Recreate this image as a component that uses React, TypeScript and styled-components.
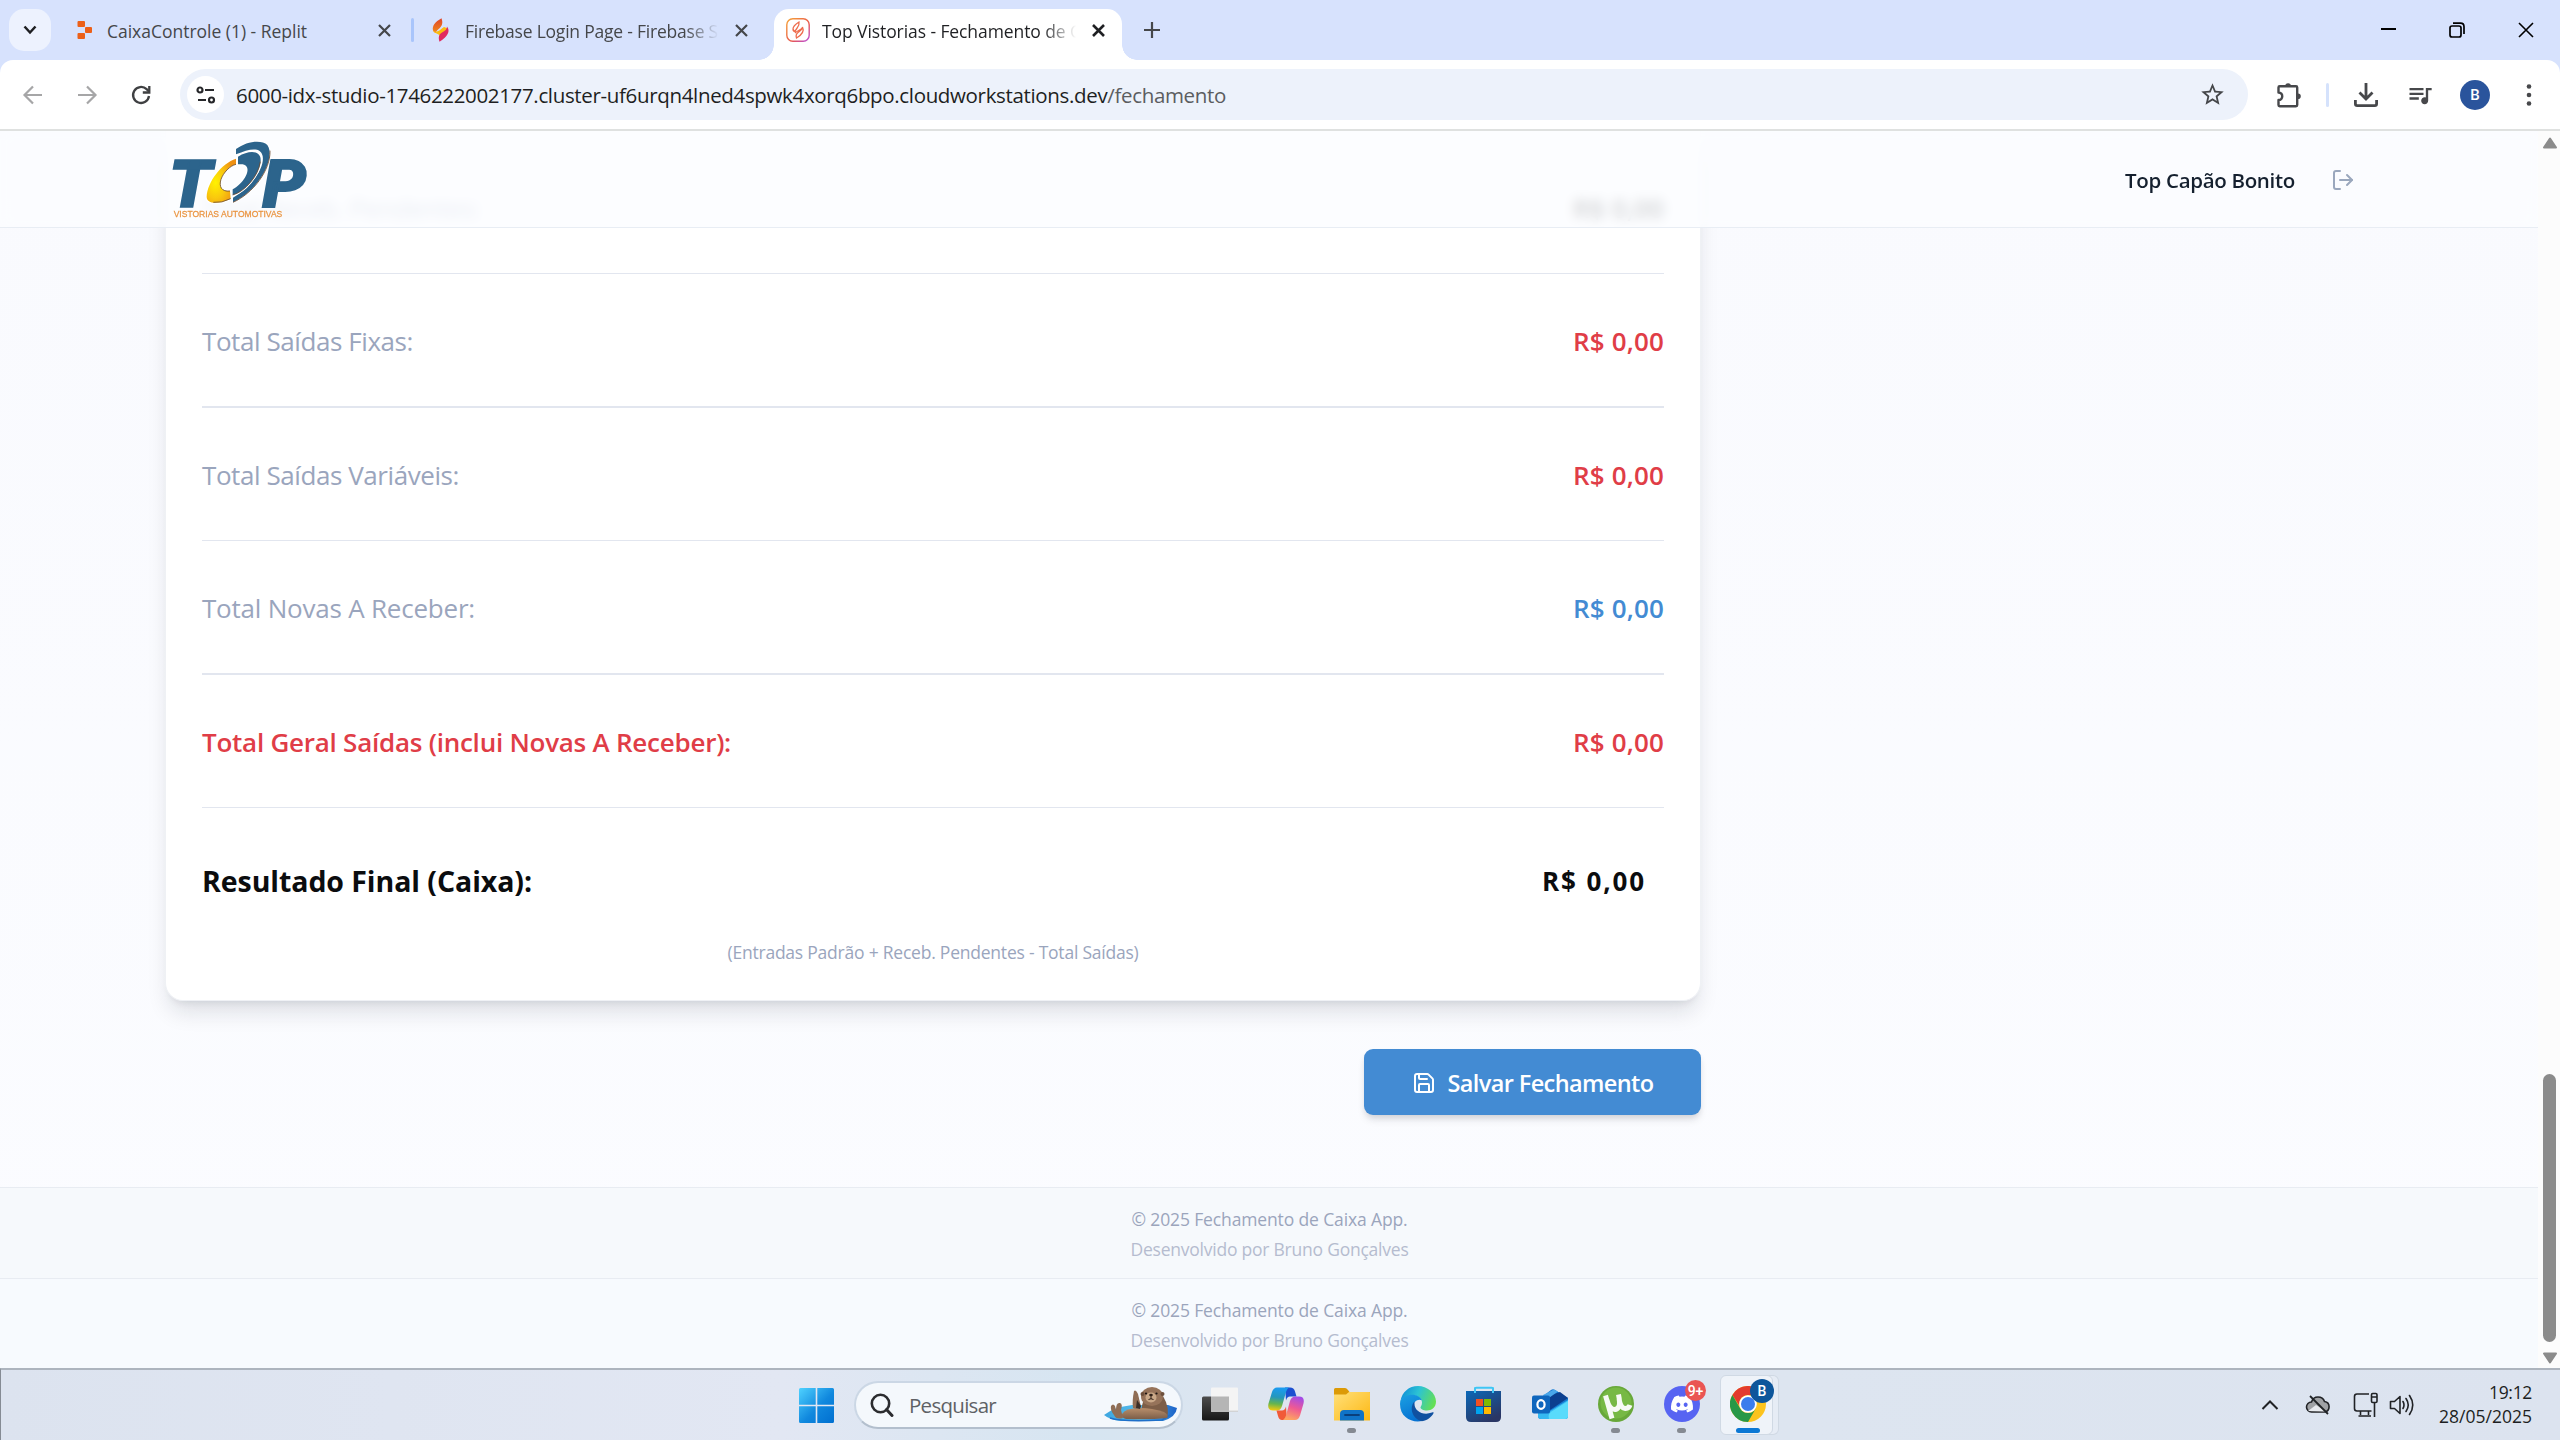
import React, { useLayoutEffect, useRef, useState } from "react";
import styled, { createGlobalStyle } from "styled-components";
import { LogOut, Save } from "lucide-react";
import { MdStarBorder, MdQueueMusic } from "react-icons/md";
import { FaDiscord } from "react-icons/fa";

const GlobalStyle = createGlobalStyle`
  * { box-sizing: border-box; }
  html, body { margin: 0; padding: 0; overflow: hidden; }
  body { font-family: "Open Sans", "Noto Sans", sans-serif; }
  svg { display: block; flex: none; }
`;

/* ---------- text fitted to a measure ---------- */

const Fitted = styled.span<{ $size: number; $weight?: number; $color?: string }>`
  display: inline-block;
  flex: none;
  white-space: pre;
  font-size: ${(p) => p.$size}px;
  font-weight: ${(p) => p.$weight ?? 400};
  color: ${(p) => p.$color ?? "inherit"};
`;

type TextProps = {
  width: number;
  size: number;
  weight?: number;
  color?: string;
  children: React.ReactNode;
};

function Text({ width, size, weight, color, children }: TextProps) {
  const ref = useRef<HTMLSpanElement>(null);
  const [spacing, setSpacing] = useState(0);
  useLayoutEffect(() => {
    const el = ref.current;
    if (!el) return;
    const count = (el.textContent ?? "").length;
    setSpacing((width - el.getBoundingClientRect().width) / count);
  }, [width]);
  return (
    <Fitted ref={ref} $size={size} $weight={weight} $color={color} style={{ letterSpacing: spacing }}>
      {children}
    </Fitted>
  );
}

/* ---------- browser frame ---------- */

const Screen = styled.div`
  width: 2560px;
  height: 1440px;
  display: flex;
  flex-direction: column;
  overflow: hidden;
  background: #d7e2fd;
`;

const TabStrip = styled.div`
  height: 60px;
  flex: none;
  display: flex;
  align-items: center;
  padding-left: 9px;
  color: #45474a;
`;

const TabSearch = styled.div`
  width: 42px;
  height: 42px;
  border-radius: 15px;
  background: #edf2fe;
  display: grid;
  place-items: center;
  margin-right: 10px;
`;

const Tab = styled.div<{ $width: number; $left: number; $right: number; $active?: boolean }>`
  width: ${(p) => p.$width}px;
  height: 51px;
  align-self: flex-end;
  flex: none;
  display: flex;
  align-items: center;
  padding: 0 ${(p) => p.$right}px 9px ${(p) => p.$left}px;
  position: relative;
  color: ${(p) => (p.$active ? "#1f2023" : "#45474a")};
  background: ${(p) => (p.$active ? "#fff" : "transparent")};
  border-radius: 15px 15px 0 0;
  &::before,
  &::after {
    content: ${(p) => (p.$active ? '""' : "none")};
    position: absolute;
    bottom: 0;
    width: 15px;
    height: 15px;
  }
  &::before {
    left: -15px;
    background: radial-gradient(circle at 0 0, transparent 14.5px, #fff 15px);
  }
  &::after {
    right: -15px;
    background: radial-gradient(circle at 100% 0, transparent 14.5px, #fff 15px);
  }
`;

const TabIcon = styled.div<{ $gap?: number }>`
  width: 24px;
  height: 24px;
  flex: none;
  display: grid;
  place-items: center;
  margin-right: ${(p) => p.$gap ?? 12}px;
`;

const TabTitle = styled.div<{ $fade?: boolean }>`
  width: 254px;
  overflow: hidden;
  flex: none;
  line-height: 28px;
  padding-top: 3px;
  -webkit-mask-image: ${(p) => (p.$fade ? "linear-gradient(90deg, #000 220px, transparent 254px)" : "none")};
`;

const TabClose = styled.div`
  margin-left: auto;
`;

const TabDivider = styled.div`
  width: 3px;
  height: 24px;
  border-radius: 2px;
  background: #a9c5fb;
`;

const NewTab = styled.div`
  margin-left: 22px;
`;

const WindowButtons = styled.div`
  margin-left: auto;
  display: flex;
  align-items: center;
  gap: 53px;
  padding-right: 26px;
`;

const Toolbar = styled.div`
  height: 71px;
  flex: none;
  background: #fff;
  border-bottom: 2px solid #dfe1e0;
  border-radius: 13px 13px 0 0;
  display: flex;
  align-items: center;
  padding: 0 22px 0 21px;
  color: #47484b;
`;

const NavButton = styled.div<{ $muted?: boolean }>`
  width: 24px;
  margin-right: 30px;
  color: ${(p) => (p.$muted ? "#a6a6a7" : "#3f4042")};
`;

const Omnibox = styled.div`
  width: 2068px;
  height: 51px;
  flex: none;
  margin-left: -3px;
  border-radius: 26px;
  background: #edf2fb;
  display: flex;
  align-items: center;
  padding: 0 22px 0 7px;
  color: #1e1f22;
`;

const SiteInfo = styled.div`
  width: 37px;
  height: 37px;
  border-radius: 50%;
  background: #fff;
  display: grid;
  place-items: center;
  margin-right: 12px;
`;

const UrlPath = styled.span`
  color: #5b5d60;
`;

const StarSlot = styled.div`
  margin-left: auto;
  color: #45474a;
`;

const ToolbarActions = styled.div`
  flex: 1;
  display: flex;
  align-items: center;
  padding-left: 28px;
`;

const ToolDivider = styled.div`
  width: 3px;
  height: 24px;
  flex: none;
  border-radius: 2px;
  background: #d5e2fc;
  margin: 0 25px 0 24px;
`;

const QueueSlot = styled.div`
  margin-left: 28px;
`;

const Avatar = styled.div`
  width: 30px;
  height: 30px;
  flex: none;
  border-radius: 50%;
  background: #2a549c;
  color: #fff;
  font: 500 15px Roboto, sans-serif;
  display: grid;
  place-items: center;
  margin: 0 36px 0 26px;
`;

/* ---------- page ---------- */

const Viewport = styled.div`
  height: 1237px;
  flex: none;
  display: flex;
  overflow: hidden;
`;

const Page = styled.div`
  width: 2538px;
  height: 1237px;
  flex: none;
  position: relative;
  overflow: hidden;
  background: linear-gradient(180deg, #f9fafe, #fbfcff);
`;

const Header = styled.header`
  position: absolute;
  inset: 0 0 auto 0;
  height: 97px;
  display: flex;
  align-items: center;
  justify-content: space-between;
  padding: 0 183px 0 166px;
  border-bottom: 1px solid #e8edf4;
  background: rgba(251, 253, 255, 0.82);
  backdrop-filter: blur(6px);
`;

const Account = styled.div`
  display: flex;
  align-items: center;
  gap: 36px;
  padding-top: 1px;
  color: #9aa7bd;
`;

const Main = styled.main`
  width: 1536px;
  margin-left: 165px;
`;

const Card = styled.section`
  background: #fff;
  border: 1px solid #eff1f5;
  border-top: 0;
  border-radius: 0 0 18px 18px;
  padding: 0 36px 31px;
  box-shadow: 0 15px 22px -4px rgba(20, 25, 40, 0.12), 0 6px 9px -6px rgba(20, 25, 40, 0.12);
`;

const Row = styled.div<{ $rule: number; $first?: boolean }>`
  height: ${(p) => (p.$first ? 142 : 132) + p.$rule}px;
  padding-top: ${(p) => (p.$first ? 12 : 1)}px;
  display: flex;
  align-items: center;
  justify-content: space-between;
  border-bottom: ${(p) => p.$rule}px solid #e2e6ef;
`;

const ResultRow = styled.div`
  height: 128px;
  padding: 17px 18px 0 0;
  display: flex;
  align-items: center;
  justify-content: space-between;
  color: #0b0c0e;
`;

const Hint = styled.div`
  display: flex;
  justify-content: center;
  line-height: 33px;
`;

const Actions = styled.div`
  display: flex;
  justify-content: flex-end;
  padding: 48px 0 72px;
`;

const SaveButton = styled.button`
  width: 337px;
  height: 66px;
  border: 0;
  border-radius: 9px;
  background: #438bd3;
  color: #fff;
  font-family: inherit;
  display: flex;
  align-items: center;
  justify-content: center;
  gap: 12px;
  padding: 1px 0 0;
  box-shadow: 0 6px 9px -2px rgba(20, 25, 40, 0.13), 0 3px 6px -2px rgba(20, 25, 40, 0.1);
`;

const Footer = styled.footer<{ $tint: string }>`
  height: 91px;
  border-top: 1px solid #e8ecf2;
  background: ${(p) => p.$tint};
  display: flex;
  flex-direction: column;
  align-items: center;
  padding: 16px 0 0 1px;
  line-height: 30px;
`;

const Scrollbar = styled.div`
  width: 22px;
  background: #fcfcfc;
  display: flex;
  flex-direction: column;
  align-items: center;
  padding: 6px 0 4px 1px;
`;

const Thumb = styled.div`
  width: 13px;
  height: 268px;
  border-radius: 7px;
  background: #8b8b8b;
  margin-top: auto;
  margin-bottom: 10px;
`;

/* ---------- taskbar ---------- */

const Taskbar = styled.div`
  height: 72px;
  flex: none;
  border-top: 2px solid #adb4be;
  border-left: 1px solid #858b94;
  background: linear-gradient(90deg, #dce3ef 0, #e2e7f3 780px, #d6e5f1 1090px, #dfe5f0 1280px, #dde5f0 1800px, #dce3ef 2560px);
  display: flex;
  align-items: center;
  padding: 0 28px 0 798px;
`;

const SearchBox = styled.div`
  width: 329px;
  height: 48px;
  margin: -1px 0 0 20px;
  border-radius: 24px;
  border: 2px solid #cbd7e5;
  border-bottom-color: #b3bfcd;
  background: #f4f8fc;
  display: flex;
  align-items: center;
  padding: 0 3px 0 14px;
  gap: 15px;
`;

const Otter = styled.div`
  margin-left: auto;
`;

const Dock = styled.div`
  display: flex;
  margin-left: 4px;
`;

const DockItem = styled.div<{ $active?: boolean }>`
  width: 66px;
  height: 70px;
  position: relative;
  display: grid;
  place-items: center;
  &::before {
    content: ${(p) => (p.$active ? '""' : "none")};
    position: absolute;
    left: 5px;
    top: 5px;
    width: 51px;
    height: 58px;
    border-radius: 6px;
    background: #eff3f9;
    border: 1px solid #d0d9e4;
    box-shadow: 6px 0 0 -1px #e6ecf5, 6px 0 0 0 #d0d9e4;
  }
`;

const DockIcon = styled.div`
  width: 36px;
  height: 36px;
  position: relative;
  margin-top: -2px;
`;

const Indicator = styled.i<{ $active?: boolean }>`
  position: absolute;
  bottom: 7px;
  left: ${(p) => (p.$active ? 21 : 28)}px;
  width: ${(p) => (p.$active ? 24 : 9)}px;
  height: 5px;
  border-radius: 3px;
  background: ${(p) => (p.$active ? "#0c78d4" : "#858a92")};
`;

const Badge = styled.b<{ $size: number; $color: string; $top: number; $right: number }>`
  position: absolute;
  top: ${(p) => p.$top}px;
  right: ${(p) => p.$right}px;
  width: ${(p) => p.$size}px;
  height: ${(p) => p.$size}px;
  border-radius: 50%;
  background: ${(p) => p.$color};
  color: #fff;
  font: 500 14px Roboto, sans-serif;
  display: grid;
  place-items: center;
`;

const Tray = styled.div`
  margin-left: auto;
  display: flex;
  align-items: center;
  color: #202225;
`;

const TrayIcon = styled.div<{ $gap: number }>`
  margin-right: ${(p) => p.$gap}px;
`;

const Clock = styled.div`
  width: 93px;
  display: flex;
  flex-direction: column;
  align-items: flex-end;
  line-height: 24px;
  padding-bottom: 2px;
  color: #1d1f22;
`;

/* ---------- drawings ---------- */

const Cross = ({ size, stroke, color }: { size: number; stroke: number; color: string }) => (
  <svg width={size} height={size} viewBox={`0 0 ${size} ${size}`}>
    <path d={`M1 1L${size - 1} ${size - 1}M${size - 1} 1L1 ${size - 1}`} stroke={color} strokeWidth={stroke} />
  </svg>
);

const ReplitMark = () => (
  <svg width="24" height="24" viewBox="0 0 24 24" fill="#ec6019">
    <rect x="4.500" y="3" width="7.500" height="6" rx="1" />
    <rect x="12" y="9" width="7" height="6" rx="1" />
    <rect x="4.500" y="15" width="7.500" height="6" rx="1" />
  </svg>
);

const StudioMark = () => (
  <svg width="24" height="24" viewBox="0 0 24 24">
    <defs>
      <linearGradient id="fl" x1="0" y1="0" x2="0" y2="1">
        <stop offset="0" stopColor="#e0452a" />
        <stop offset="1" stopColor="#f08a1c" />
      </linearGradient>
    </defs>
    <path d="M12.500 0.300C6 4 3 8 4 12.500c.5 1.600 2 2.500 3 2.500 0-4 9-5 5.500-14.700z" fill="url(#fl)" />
    <path d="M4 11.500c2 5 7 .5 11-2.500l4 1.500C19.500 12 14 14 11 18c-2-3-6-2-7-6.500z" fill="#fbbc12" />
    <path d="M18 8.500c3.500 4.500 1 10-7.500 15.300C9 19 10 16.500 13 14.500c3-2 5-3 5-6z" fill="#e1295f" />
  </svg>
);

const VistoriasMark = () => (
  <svg width="24" height="24" viewBox="0 0 24 24" fill="none">
    <defs>
      <linearGradient id="vg" x1="0" y1="0" x2="1" y2="1">
        <stop offset="0" stopColor="#f6a53a" />
        <stop offset="0.600" stopColor="#e8574c" />
        <stop offset="1" stopColor="#b94ee0" />
      </linearGradient>
    </defs>
    <rect x="0.800" y="0.800" width="22.400" height="22.400" rx="6" stroke="url(#vg)" strokeWidth="1.400" />
    <path
      d="M13 4c-4 2.500-6 4.500-6 7 0 1.500 1 2.500 2 2.500C10 10 14 9 13 4zM16.500 9.500c-1 2-4.500 3-7 5-.500-1.500-2-1.500-2.300-3M16.500 9c2 4-1 8-6 11-1-3-.500-4 1.500-5.500 2-1.500 4.500-3 4.500-5.500z"
      stroke="#ee6c4d"
      strokeWidth="1.300"
    />
  </svg>
);

const Arrow = ({ flip }: { flip?: boolean }) => (
  <svg width="24" height="24" viewBox="0 0 24 24" fill="none" stroke="currentColor" strokeWidth="2.200">
    <path d={flip ? "M3 12h17M12 3.500l8.500 8.500-8.500 8.500" : "M21 12H4M12 3.500L3.500 12l8.500 8.500"} />
  </svg>
);

const Reload = () => (
  <svg width="24" height="24" viewBox="0 0 24 24" fill="none" stroke="currentColor" strokeWidth="2.300">
    <path d="M20 13a8 8 0 1 1-2.400-6.800L20 8.500" />
    <path d="M20.300 3v6.500h-6.500" />
  </svg>
);

const TuneIcon = () => (
  <svg width="20" height="20" viewBox="0 0 20 20" fill="none" stroke="#26272a" strokeWidth="2.200">
    <circle cx="4" cy="5" r="2.500" />
    <path d="M9 5h9M2 15h8" />
    <circle cx="15.500" cy="15" r="2.500" />
  </svg>
);

const Puzzle = () => (
  <svg width="26" height="26" viewBox="0 0 26 26" fill="none" stroke="currentColor" strokeWidth="2.400">
    <path
      d="M2.500 5.500q0-1.200 1.200-1.200H20q1.200 0 1.200 1.200V23q0 1.200-1.200 1.200H3.700q-1.200 0-1.200-1.200v-5c5 0 5-7.500 0-7.500z"
      strokeLinejoin="round"
    />
    <path d="M9.300 4a2.800 2.800 0 0 1 5.600 0zM22 11.500a2.800 2.800 0 0 1 0 5.600z" fill="currentColor" stroke="none" />
  </svg>
);

const Download = () => (
  <svg width="24" height="24" viewBox="0 0 24 24" fill="none" stroke="currentColor" strokeWidth="2.800">
    <path d="M12 0v15M5.500 9.500L12 16l6.500-6.500M1.400 17v3.800q0 1.800 1.800 1.800h17.600q1.800 0 1.800-1.800V17" />
  </svg>
);

const Kebab = () => (
  <svg width="6" height="24" viewBox="0 0 6 24" fill="#47484b">
    <circle cx="3" cy="3.500" r="2.300" />
    <circle cx="3" cy="12" r="2.300" />
    <circle cx="3" cy="20.500" r="2.300" />
  </svg>
);

const TopLogo = () => (
  <svg width="150" height="96" viewBox="0 0 150 96">
    <defs>
      <radialGradient id="gold" cx="0.300" cy="0.550" r="0.700">
        <stop offset="0" stopColor="#fff200" />
        <stop offset="0.500" stopColor="#f9c80e" />
        <stop offset="1" stopColor="#ee9012" />
      </radialGradient>
    </defs>
    <g transform="translate(-16 -1) scale(.33333)">
      <g fill="#2c648c" fontFamily="Roboto, sans-serif" fontWeight="900" fontStyle="italic" stroke="#2c648c">
        <text x="57" y="231" fontSize="198" strokeWidth="5" textLength="128" lengthAdjust="spacingAndGlyphs">
          T
        </text>
        <text x="338" y="231" fontSize="198" strokeWidth="6" textLength="130" lengthAdjust="spacingAndGlyphs">
          P
        </text>
      </g>
      <g stroke="#fff" strokeWidth="7" strokeLinejoin="round" paintOrder="stroke">
        <path
          d="M258 86C215 100 172 155 170 200C170 222 205 224 242 206L240 183C215 186 206 170 213 148C220 128 240 107 258 103Z"
          fill="url(#gold)"
        />
        <path
          d="M258 57C290 33 335 28 352 45C378 80 330 180 249 217L249 203C300 175 345 115 338 78C332 50 300 55 258 73Z"
          fill="#2c648c"
        />
        <path
          d="M264 80C300 58 334 62 332 92C328 135 285 185 248 195L248 178C280 160 300 125 290 110C285 102 275 102 264 103Z"
          fill="#2c648c"
        />
      </g>
      <path
        d="M258 103C240 107 220 128 213 148C206 170 215 186 240 183M242 206Q215 220 190 217M360 62C362 120 310 190 249 217M331 95C326 137 285 185 248 195"
        fill="none"
        stroke="#6c4a30"
        strokeWidth="2.500"
      />
      <text
        x="71"
        y="260"
        fontSize="29"
        fontFamily="Liberation Sans, sans-serif"
        fill="#ea9440"
        stroke="#ea9440"
        strokeWidth="0.800"
        textLength="326"
        lengthAdjust="spacingAndGlyphs"
      >
        VISTORIAS AUTOMOTIVAS
      </text>
    </g>
  </svg>
);

const ScrollArrow = ({ down }: { down?: boolean }) => (
  <svg width="16" height="12" viewBox="0 0 16 12">
    <path
      d={down ? "M2 1.500h12L8 10.500z" : "M2 10.500h12L8 1.500z"}
      fill="#8b8b8b"
      stroke="#8b8b8b"
      strokeWidth="2"
      strokeLinejoin="round"
    />
  </svg>
);

const WindowsLogo = () => (
  <svg width="35" height="35" viewBox="0 0 35 35">
    <defs>
      <linearGradient id="win" gradientUnits="userSpaceOnUse" x1="0" y1="0" x2="35" y2="35">
        <stop offset="0" stopColor="#4fd2ff" />
        <stop offset="0.550" stopColor="#1088de" />
        <stop offset="1" stopColor="#006fd0" />
      </linearGradient>
    </defs>
    <path
      d="M1.500 0H16.700V16.700H0V1.500Q0 0 1.500 0zM18.300 0H33.500Q35 0 35 1.500V16.700H18.300zM0 18.300H16.700V35H1.500Q0 35 0 33.500zM18.300 18.300H35V33.500Q35 35 33.500 35H18.300z"
      fill="url(#win)"
    />
  </svg>
);

const SearchIcon = () => (
  <svg width="24" height="24" viewBox="0 0 24 24" fill="none" stroke="#2b2c2f" strokeWidth="2.600">
    <circle cx="10.500" cy="10.500" r="8.700" />
    <path d="M16.500 16.500l5.500 6" strokeLinecap="round" strokeWidth="3" />
  </svg>
);

const OtterArt = () => (
  <svg width="74" height="36" viewBox="0 0 74 36">
    <defs>
      <linearGradient id="fur" x1="0" y1="0" x2="0" y2="1">
        <stop offset="0" stopColor="#b98f6c" />
        <stop offset="1" stopColor="#7b5d48" />
      </linearGradient>
      <linearGradient id="raft" x1="0" y1="0" x2="1" y2="0">
        <stop offset="0" stopColor="#3da6e0" />
        <stop offset="0.500" stopColor="#56bdec" />
        <stop offset="1" stopColor="#1c62c8" />
      </linearGradient>
    </defs>
    <path d="M0 28Q10 20 28 18l36 0 9 3q-1 9-14 13H17Q6 33 0 28z" fill="url(#raft)" />
    <path d="M6 31q12 4 52 2l8-5" fill="none" stroke="#1f6fc9" strokeWidth="1.500" />
    <path d="M39 15q-3 8 0 16h24q3-10-4-22z" fill="#7d5e48" />
    <path d="M18 27q3-6 18-6 12 0 24 4 5 3 3 6-18 2-41 1-5-1-4-5z" fill="url(#fur)" />
    <path d="M7 19q2-3 4 0l1 4q0-8 4-7 3 1 1 7l2 8q-7 2-9-3-4-5-3-9z" fill="#8f6d55" />
    <path d="M30 4q2-2 4 3l3 13q-4 3-8 1-1-7 1-17z" fill="#8f6d55" />
    <path d="M33 13l4 6-1 3-4-1z" fill="#3b2e28" />
    <ellipse cx="48" cy="9.500" rx="11" ry="9.500" fill="#96735a" />
    <circle cx="38.500" cy="7" r="2" fill="#6d4f3c" />
    <circle cx="58.500" cy="7" r="2" fill="#6d4f3c" />
    <ellipse cx="47" cy="10.500" rx="5.500" ry="5" fill="#c9a888" />
    <circle cx="42" cy="6.500" r="1.100" fill="#1c1512" />
    <circle cx="52.500" cy="6.500" r="1.100" fill="#1c1512" />
    <ellipse cx="47" cy="8" rx="1.800" ry="1.300" fill="#33221a" />
    <path d="M47 9v3M44.500 12.500q2.500-1.500 5 0" stroke="#33221a" fill="none" />
  </svg>
);

const TaskView = () => (
  <svg width="36" height="36" viewBox="0 0 36 36">
    <defs>
      <linearGradient id="tv" x1="0" y1="0" x2="0" y2="1">
        <stop offset="0" stopColor="#4d4d4d" />
        <stop offset="1" stopColor="#171717" />
      </linearGradient>
    </defs>
    <rect x="0" y="10.500" width="27" height="24" rx="1.500" fill="url(#tv)" />
    <rect x="9" y="1.500" width="27" height="24" rx="1" fill="#f4f4f4" />
    <path d="M9 10.500h18v15H9z" fill="#b5b5b5" />
    <path d="M9 25.200h27" stroke="#c8c8c8" />
  </svg>
);

const Copilot = () => (
  <svg width="36" height="36" viewBox="0 0 36 36">
    <defs>
      <linearGradient id="cpA" x1="0.300" y1="0" x2="0.200" y2="1">
        <stop offset="0" stopColor="#1b9bf0" />
        <stop offset="0.400" stopColor="#2497bd" />
        <stop offset="0.700" stopColor="#66b54e" />
        <stop offset="1" stopColor="#fccb0a" />
      </linearGradient>
      <linearGradient id="cpB" x1="0.700" y1="0" x2="0.400" y2="1">
        <stop offset="0" stopColor="#a24be8" />
        <stop offset="0.500" stopColor="#ef5a93" />
        <stop offset="1" stopColor="#fda660" />
      </linearGradient>
    </defs>
    <path d="M17 1.500h5q4 0 5 4l1.500 5H22q-3 0-4 4z" fill="#1c4fd0" />
    <path d="M9 1.500h12q-2 1-3 4.500L14 20q-1.500 4.500-5 4.500H5q-6 0-4.500-7L4 6q1.500-4.500 5-4.500z" fill="url(#cpA)" />
    <path d="M19 34h-5q-3 0-4-4l-1.500-5.500H14q3 0 4-4z" fill="#f15a38" />
    <path d="M27 34H15q2-1 3-4.500L22 15q1.500-4.500 5-4.500h4q6 0 4.500 7L32 29.500Q30.500 34 27 34z" fill="url(#cpB)" />
  </svg>
);

const Explorer = () => (
  <svg width="36" height="36" viewBox="0 0 36 36">
    <defs>
      <linearGradient id="fo" x1="0" y1="0" x2="1" y2="1">
        <stop offset="0" stopColor="#ffe07a" />
        <stop offset="1" stopColor="#fdb813" />
      </linearGradient>
    </defs>
    <path d="M0 3.500Q0 2 1.500 2H11q1.500 0 3 2l1.500 2H35q1 0 1 1v10H0z" fill="#dc9a06" />
    <path d="M0 8.500h12L15 6h20q1 0 1 1v27.500H0z" fill="url(#fo)" />
    <path d="M6 34.500V28q0-4 4-4h16q4 0 4 4v6.500z" fill="#0f73c8" />
    <path d="M11 29h14" stroke="#0a3f7c" strokeWidth="1.800" strokeLinecap="round" />
  </svg>
);

const Edge = () => (
  <svg width="36" height="36" viewBox="0 0 36 36">
    <defs>
      <linearGradient id="edA" x1="0" y1="0.300" x2="1" y2="0.600">
        <stop offset="0" stopColor="#0f8fd8" />
        <stop offset="0.450" stopColor="#2cc3d4" />
        <stop offset="1" stopColor="#66e052" />
      </linearGradient>
      <linearGradient id="edB" x1="0" y1="0" x2="0.400" y2="1">
        <stop offset="0" stopColor="#1ba0e2" />
        <stop offset="1" stopColor="#0672d2" />
      </linearGradient>
    </defs>
    <path d="M.500 15C2 6 9 0 18 0s18 7 18 15.500c0 6-4.500 9-9 9-4 0-6.500-1.500-6.500-3 0-1 1.500-2 1.500-5 0-4-4-7-9-7S2 12 .500 15z" fill="url(#edA)" />
    <path d="M.300 15C2 11 7 8.700 12 8.700c5 0 9 2.500 9.800 5.500-4-2-10 2-9 9C14 31 21 35 27 33 17 39 0 34 0 18z" fill="url(#edB)" />
    <path d="M14.500 15.500C9 21 12 33 22 35.200c5-.700 9.500-4 11.500-8 .5-1-.5-1.200-1.500-.7C23 30 14.500 25 14.500 18z" fill="#1051a0" />
  </svg>
);

const Store = () => (
  <svg width="36" height="36" viewBox="0 0 36 36">
    <defs>
      <linearGradient id="st" x1="0" y1="0" x2="0.600" y2="1">
        <stop offset="0" stopColor="#0b68b8" />
        <stop offset="1" stopColor="#2a3664" />
      </linearGradient>
    </defs>
    <path d="M9 8V3q0-1.300 1.300-1.300h15.400Q27 1.700 27 3v5" fill="none" stroke="#3fc6f5" strokeWidth="2" />
    <path d="M0 5h35v26q0 5-5 5H5q-5 0-5-5z" fill="url(#st)" />
    <path d="M9 1.500v5.500M27 1.500v5.500" stroke="#3fc6f5" strokeWidth="2" />
    <path fill="#f25022" d="M10 13h7v7h-7z" />
    <path fill="#7fba00" d="M18 13h7v7h-7z" />
    <path fill="#00a4ef" d="M10 21h7v7h-7z" />
    <path fill="#ffb900" d="M18 21h7v7h-7z" />
  </svg>
);

const Outlook = () => (
  <svg width="36" height="36" viewBox="0 0 36 36">
    <path d="M6 14L19 4q2-1.500 4 0l13 8v18q0 3-3 3H9q-3 0-3-3z" fill="#1478cf" />
    <path d="M16 10l12-4 8 6-18 12z" fill="#0c3f8f" />
    <path d="M11 9l11-5.500 4 2L14 14z" fill="#4aa7ea" />
    <path d="M6 22l12 3 18-11v16q0 3-3 3H9q-3 0-3-3z" fill="#35b8f1" />
    <path d="M17 33q-2-6 5-9l14-9v15q0 3-3 3z" fill="#59dbfb" />
    <rect x="0" y="9.500" width="18" height="18" rx="2" fill="#0f66bd" />
    <ellipse cx="9" cy="18.500" rx="3.600" ry="4.300" fill="none" stroke="#fff" strokeWidth="2.200" />
  </svg>
);

const Torrent = () => (
  <svg width="36" height="36" viewBox="0 0 36 36">
    <circle cx="18" cy="18" r="18" fill="#68a83a" />
    <circle cx="18" cy="17" r="15.500" fill="#77b944" />
    <path
      d="M7.500 9.500L14 32.500M9 14q2.500 10 8.500 9.500 6-1.500 3-15M21 13q2 10 6.500 9.500 3.500-.3 4.500-3.500"
      fill="none"
      stroke="#f7faf5"
      strokeWidth="5"
    />
  </svg>
);

const DiscordDisc = styled.div`
  width: 36px;
  height: 36px;
  border-radius: 50%;
  background: #5764f2;
  color: #fff;
  display: grid;
  place-items: center;
`;

const Chrome = () => (
  <svg width="36" height="36" viewBox="0 0 36 36">
    <circle cx="18" cy="18" r="18" fill="#fcc31e" />
    <path d="M2.400 9A18 18 0 0 1 33.600 9H18a9 9 0 0 0-7.800 4.500l-1 6z" fill="#e33b2e" />
    <path d="M2.400 9A18 18 0 0 0 18 36l7.800-13.500a9 9 0 0 1-15.600 0z" fill="#279847" />
    <circle cx="18" cy="18" r="8.800" fill="#fff" />
    <circle cx="18" cy="18" r="7" fill="#3b7ded" />
  </svg>
);

const CloudOff = () => (
  <svg width="26" height="24" viewBox="0 0 26 24">
    <path d="M6.500 19a5 5 0 0 1 0-10Q8 4 13 4t6.500 4.500A5.300 5.300 0 0 1 19.500 19z" fill="#a0a2a5" stroke="#202225" strokeWidth="1.600" />
    <path d="M3 18l8-6 10 6.500z" fill="#e8eaee" />
    <path d="M5 3l18 18" stroke="#202225" strokeWidth="1.800" />
  </svg>
);

const Network = () => (
  <svg width="26" height="26" viewBox="0 0 26 26" fill="none" stroke="currentColor" strokeWidth="1.600">
    <path d="M16 2H4Q1.500 2 1.500 4.500v12Q1.500 19 4 19h14.500M7.500 19v4M15.500 19v4M5.500 24h12.500" />
    <rect x="18.500" y="1.500" width="5.500" height="9" rx="1.200" />
    <path d="M18.500 5h5.500M21.500 10.500V25" />
  </svg>
);

const Volume = () => (
  <svg width="26" height="24" viewBox="0 0 26 24" fill="none" stroke="currentColor" strokeWidth="1.600">
    <path d="M1.500 8.500h4L11 3.500v17l-5.500-5h-4z" strokeLinejoin="round" />
    <path d="M14 8.500q2 3.500 0 7M17 5.500q4.500 6.500 0 13M20.500 2.500q6.500 9.500 0 19" strokeLinecap="round" />
  </svg>
);

/* ---------- data ---------- */

const MUTED = "#9aa5bd";
const RED = "#e03d47";
const BLUE = "#438bd3";

const rows = [
  { label: "Total Receb. Pendentes:", width: 278, color: MUTED, value: "#0b0c0e", rule: 1 },
  { label: "Total Saídas Fixas:", width: 211, color: MUTED, value: RED, rule: 2 },
  { label: "Total Saídas Variáveis:", width: 257, color: MUTED, value: RED, rule: 1 },
  { label: "Total Novas A Receber:", width: 273, color: MUTED, value: BLUE, rule: 2 },
  { label: "Total Geral Saídas (inclui Novas A Receber):", width: 529, color: RED, value: RED, rule: 1, strong: true },
];

const dock = [
  { id: "tasks", icon: <TaskView /> },
  { id: "copilot", icon: <Copilot /> },
  { id: "explorer", icon: <Explorer />, running: true },
  { id: "edge", icon: <Edge /> },
  { id: "store", icon: <Store /> },
  { id: "outlook", icon: <Outlook /> },
  { id: "torrent", icon: <Torrent />, running: true },
  {
    id: "discord",
    running: true,
    icon: (
      <>
        <DiscordDisc>
          <FaDiscord size={24} />
        </DiscordDisc>
        <Badge $size={21} $color="#ea5553" $top={-6} $right={-6}>
          9+
        </Badge>
      </>
    ),
  },
  {
    id: "chrome",
    running: true,
    active: true,
    icon: (
      <>
        <Chrome />
        <Badge $size={24} $color="#0d569b" $top={-7} $right={-8}>
          B
        </Badge>
      </>
    ),
  },
];

export default function App() {
  return (
    <Screen>
      <GlobalStyle />
      <TabStrip>
        <TabSearch>
          <svg width="14" height="10" viewBox="0 0 14 10" fill="none" stroke="#1e1f22" strokeWidth="2.500">
            <path d="M1.500 1.500L7 7.500l5.500-6" />
          </svg>
        </TabSearch>
        <Tab $width={350} $left={12} $right={20}>
          <TabIcon $gap={10}>
            <ReplitMark />
          </TabIcon>
          <TabTitle>
            <Text width={200} size={17.5}>
              CaixaControle (1) - Replit
            </Text>
          </TabTitle>
          <TabClose>
            <Cross size={13} stroke={2.2} color="#45474a" />
          </TabClose>
        </Tab>
        <TabDivider />
        <Tab $width={360} $left={15} $right={26}>
          <TabIcon>
            <StudioMark />
          </TabIcon>
          <TabTitle $fade>
            <Text width={253} size={17.5}>
              Firebase Login Page - Firebase S
            </Text>
          </TabTitle>
          <TabClose>
            <Cross size={13} stroke={2.2} color="#45474a" />
          </TabClose>
        </Tab>
        <Tab $width={348} $left={12} $right={17} $active>
          <TabIcon>
            <VistoriasMark />
          </TabIcon>
          <TabTitle $fade>
            <Text width={259} size={17.5}>
              Top Vistorias - Fechamento de C
            </Text>
          </TabTitle>
          <TabClose>
            <Cross size={13} stroke={2.6} color="#1f2023" />
          </TabClose>
        </Tab>
        <NewTab>
          <svg width="16" height="16" viewBox="0 0 16 16" stroke="#45474a" strokeWidth="2.200">
            <path d="M8 0v16M0 8h16" />
          </svg>
        </NewTab>
        <WindowButtons>
          <svg width="15" height="16" viewBox="0 0 15 16" stroke="#000" strokeWidth="2">
            <path d="M0 7h15" />
          </svg>
          <svg width="16" height="16" viewBox="0 0 16 16" fill="none" stroke="#000" strokeWidth="1.700">
            <rect x="1" y="4" width="11" height="11" rx="2" />
            <path d="M4 1.200h7.500Q15 1.200 15 4.700V12" />
          </svg>
          <Cross size={16} stroke={1.6} color="#000" />
        </WindowButtons>
      </TabStrip>

      <Toolbar>
        <NavButton $muted>
          <Arrow />
        </NavButton>
        <NavButton $muted>
          <Arrow flip />
        </NavButton>
        <NavButton>
          <Reload />
        </NavButton>
        <Omnibox>
          <SiteInfo>
            <TuneIcon />
          </SiteInfo>
          <Text width={990} size={20.5}>
            6000-idx-studio-1746222002177.cluster-uf6urqn4lned4spwk4xorq6bpo.cloudworkstations.dev
            <UrlPath>/fechamento</UrlPath>
          </Text>
          <StarSlot>
            <MdStarBorder size={27} />
          </StarSlot>
        </Omnibox>
        <ToolbarActions>
          <Puzzle />
          <ToolDivider />
          <Download />
          <QueueSlot>
            <MdQueueMusic size={28} />
          </QueueSlot>
          <Avatar>B</Avatar>
          <Kebab />
        </ToolbarActions>
      </Toolbar>

      <Viewport>
        <Page>
          <Main>
            <Card>
              {rows.map((r, i) => (
                <Row key={r.label} $rule={r.rule} $first={i === 0}>
                  <Text width={r.width} size={26} weight={r.strong ? 600 : 400} color={r.color}>
                    {r.label}
                  </Text>
                  <Text width={91} size={26} weight={600} color={r.value}>
                    R$ 0,00
                  </Text>
                </Row>
              ))}
              <ResultRow>
                <Text width={330} size={28.5} weight={700}>
                  Resultado Final (Caixa):
                </Text>
                <Text width={104} size={26} weight={700}>
                  R$ 0,00
                </Text>
              </ResultRow>
              <Hint>
                <Text width={411} size={17.5} color={MUTED}>
                  (Entradas Padrão + Receb. Pendentes - Total Saídas)
                </Text>
              </Hint>
            </Card>
            <Actions>
              <SaveButton>
                <Save size={24} strokeWidth={2} />
                <Text width={206} size={23.5} weight={600}>
                  Salvar Fechamento
                </Text>
              </SaveButton>
            </Actions>
          </Main>
          {["#f6f9fc", "#f7fafe"].map((tint) => (
            <Footer key={tint} $tint={tint}>
              <Text width={276} size={17.5} color="#9ba5bc">
                © 2025 Fechamento de Caixa App.
              </Text>
              <Text width={278} size={17.5} color="#b5bccf">
                Desenvolvido por Bruno Gonçalves
              </Text>
            </Footer>
          ))}
          <Header>
            <TopLogo />
            <Account>
              <Text width={170} size={20.5} weight={600} color="#15202f">
                Top Capão Bonito
              </Text>
              <LogOut size={24} strokeWidth={2} />
            </Account>
          </Header>
        </Page>
        <Scrollbar>
          <ScrollArrow />
          <Thumb />
          <ScrollArrow down />
        </Scrollbar>
      </Viewport>

      <Taskbar>
        <WindowsLogo />
        <SearchBox>
          <SearchIcon />
          <Text width={87} size={20.5} color="#5e6165">
            Pesquisar
          </Text>
          <Otter>
            <OtterArt />
          </Otter>
        </SearchBox>
        <Dock>
          {dock.map((d) => (
            <DockItem key={d.id} $active={d.active}>
              <DockIcon>{d.icon}</DockIcon>
              {d.running && <Indicator $active={d.active} />}
            </DockItem>
          ))}
        </Dock>
        <Tray>
          <TrayIcon $gap={26}>
            <svg width="18" height="10" viewBox="0 0 18 10" fill="none" stroke="currentColor" strokeWidth="2">
              <path d="M1.500 9L9 1.500 16.500 9" />
            </svg>
          </TrayIcon>
          <TrayIcon $gap={22}>
            <CloudOff />
          </TrayIcon>
          <TrayIcon $gap={10}>
            <Network />
          </TrayIcon>
          <TrayIcon $gap={24}>
            <Volume />
          </TrayIcon>
          <Clock>
            <Text width={43} size={17.5}>
              19:12
            </Text>
            <Text width={93} size={17.5}>
              28/05/2025
            </Text>
          </Clock>
        </Tray>
      </Taskbar>
    </Screen>
  );
}
